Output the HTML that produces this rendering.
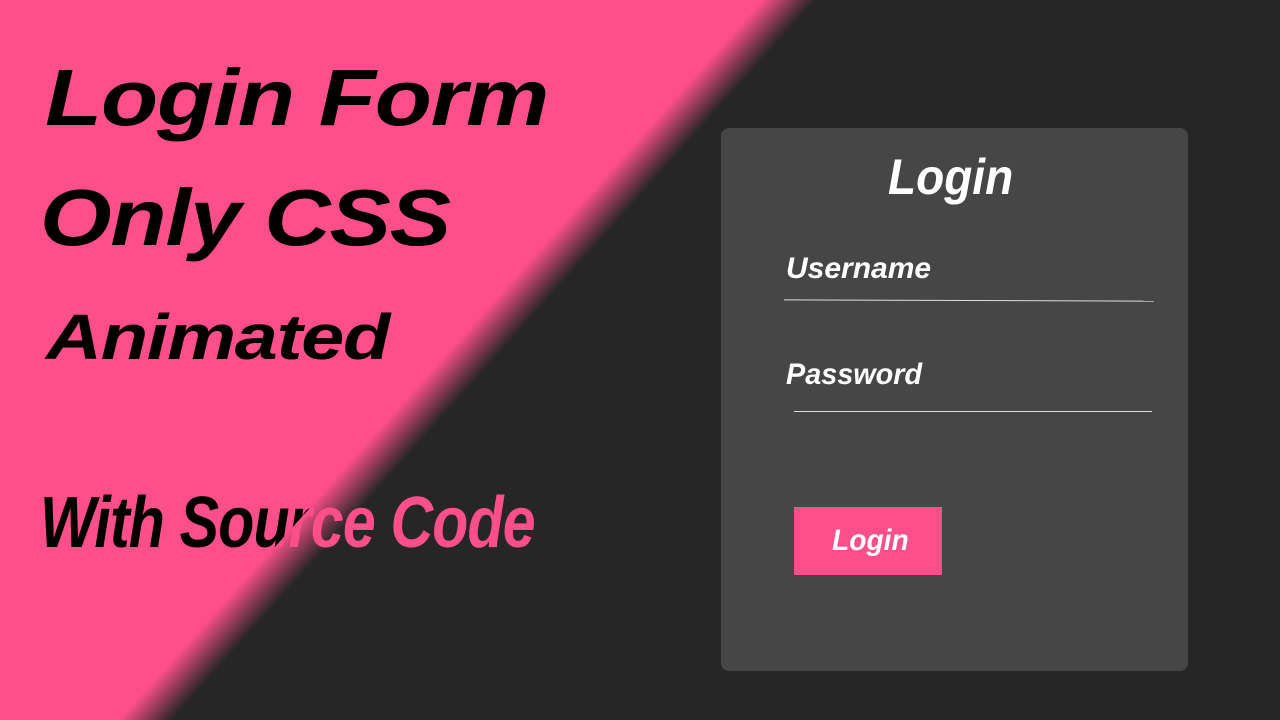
<!DOCTYPE html>
<html><head><meta charset="utf-8">
<style>
*{margin:0;padding:0;box-sizing:border-box}
html,body{width:1280px;height:720px;overflow:hidden}
body{position:relative;font-family:"Liberation Sans",sans-serif;font-weight:bold;font-style:italic;
background:linear-gradient(131.8deg,#ff4f8b 0%,#ff4f8b 39.6%,#262626 42.4%,#262626 100%);}
.t{position:absolute;white-space:nowrap;transform-origin:0 0;color:#000;letter-spacing:-1px}
.layer{position:absolute;left:0;top:0;width:1280px;height:720px}
.card{position:absolute;left:721px;top:128px;width:467px;height:543px;background:#464646;border-radius:8px}
.w{position:absolute;color:#fff;white-space:nowrap;transform-origin:0 0}
.line{position:absolute;height:1px;background:#ddd}
.btn{position:absolute;left:794px;top:507px;width:148px;height:68px;background:#ff4f8b}
</style></head><body>
<div class="t" style="left:45px;top:52px;font-size:80px;transform:scaleX(1.17)">Login Form</div>
<div class="t" style="left:40px;top:172px;font-size:80px;transform:scaleX(1.15)">Only CSS</div>
<div class="t" style="left:46px;top:300px;font-size:64px;transform:scaleX(1.21)">Animated</div>
<div class="layer" style="clip-path:polygon(0 0,765px 0,120px 720px,0 720px)">
<div class="t" style="left:40px;top:482px;font-size:72px;transform:scaleX(0.82)">With Source Code</div>
</div>
<div class="layer" style="clip-path:polygon(765px 0,1280px 0,1280px 720px,120px 720px)">
<div class="t" style="left:40px;top:482px;font-size:72px;transform:scaleX(0.82);color:#ff4f8b">With Source Code</div>
</div>
<div class="card"></div>
<div class="w" style="left:888px;top:148px;font-size:50px;transform:scaleX(0.92)">Login</div>
<div class="w" style="left:786px;top:252px;font-size:30px;transform:scaleX(1.0)">Username</div>
<div class="line" style="left:784px;top:300px;width:370px;transform:rotate(0.2deg)"></div>
<div class="w" style="left:786px;top:358px;font-size:30px;transform:scaleX(0.96)">Password</div>
<div class="line" style="left:794px;top:411px;width:358px"></div>
<div class="btn"></div>
<div class="w" style="left:832px;top:524px;font-size:30px;transform:scaleX(0.94)">Login</div>
</body></html>
